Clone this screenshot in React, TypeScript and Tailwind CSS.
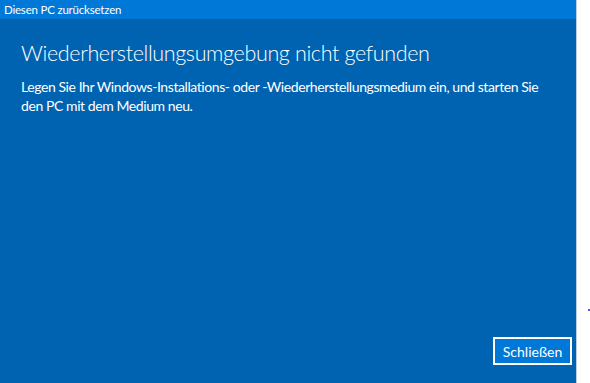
import React from "react";

export default function App() {
  return (
    <div className="flex w-[590px] h-[383px] bg-white overflow-hidden" style={{ fontFamily: '"Lato", "Noto Sans", sans-serif' }}>
      <div className="flex flex-col w-[576px] h-full bg-[#0063b1] text-white">
        <div className="h-[19px] bg-[#0078d7] pl-[4px] text-[11.5px] leading-[19px] tracking-[-0.2px]">Diesen PC zurücksetzen</div>
        <div className="flex flex-col flex-1 pl-[21px] pr-[4px]">
          <h1 className="mt-[19px] text-[21.5px] leading-[30px] font-light tracking-[-0.35px]">Wiederherstellungsumgebung nicht gefunden</h1>
          <p className="mt-[9px] w-[525px] text-[14px] leading-[19px] tracking-[-0.42px]">
            Legen Sie Ihr Windows-Installations- oder -Wiederherstellungsmedium ein, und starten Sie den PC mit dem Medium neu.
          </p>
          <div className="flex-1" />
          <div className="flex justify-end pb-[18px]">
            <button className="w-[79px] h-[28px] border-2 border-white bg-[#0078d7] text-[14px] text-white">Schließen</button>
          </div>
        </div>
      </div>
      <div className="w-px h-full bg-[#b9cde3]" />
      <div className="relative flex-1">
        <div className="absolute left-[11px] top-[309px] w-[2px] h-[2px] bg-[#5a5ae0]" />
      </div>
    </div>
  );
}
